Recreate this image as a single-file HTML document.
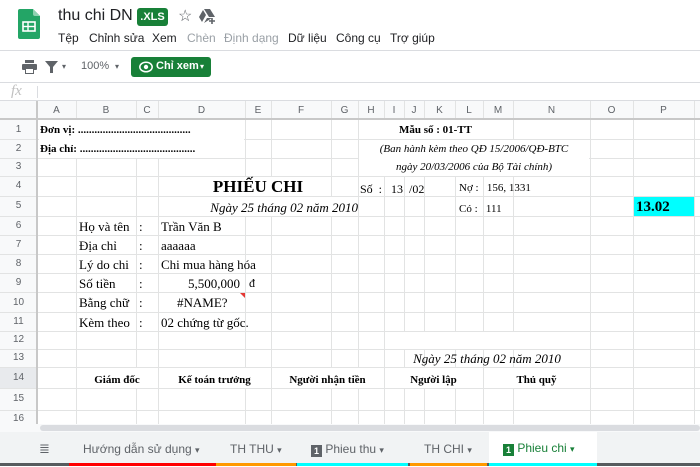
<!DOCTYPE html>
<html><head><meta charset="utf-8"><style>
*{margin:0;padding:0;box-sizing:border-box}
body{width:700px;height:466px;overflow:hidden;background:#fff;position:relative;font-family:"Liberation Sans",Arial,sans-serif;color:#202124}
.a{position:absolute;white-space:nowrap}
.s{font-family:"Liberation Serif","Times New Roman",serif;color:#000}
.m{font-size:12px;top:31px}
.g{color:#9aa0a6}
.hd{font-size:10px;color:#5f6368;text-align:center;position:absolute}
.tab{position:absolute;top:432px;height:34px;font-size:12px;color:#5f6368;line-height:32px;padding-left:14px}
</style></head><body>
<svg class="a" style="left:18px;top:9px" width="22" height="30" viewBox="0 0 22 30"><path d="M2 0h13l7 7v21a2 2 0 0 1-2 2H2a2 2 0 0 1-2-2V2a2 2 0 0 1 2-2z" fill="#23a566"/><path d="M15 0l7 7h-5a2 2 0 0 1-2-2z" fill="#8ed1b1"/><rect x="5" y="13" width="12" height="9" fill="none" stroke="#fff" stroke-width="1.6"/><line x1="5" y1="17.5" x2="17" y2="17.5" stroke="#fff" stroke-width="1.4"/><line x1="10" y1="13" x2="10" y2="22" stroke="#fff" stroke-width="1.4"/></svg>
<div class="a" style="left:58px;top:7px;font-size:16px;color:#202124">thu chi DN</div>
<div class="a" style="left:137px;top:8px;width:31px;height:18px;background:#188038;color:#fff;font-size:11px;font-weight:bold;line-height:18px;text-align:center;border-radius:3px">.XLS</div>
<div class="a" style="left:178px;top:6px;font-size:16px;color:#5f6368">☆</div>
<svg class="a" style="left:199px;top:9px" width="17" height="15" viewBox="0 0 17 15"><path d="M5 0h6l5 8h-6zM4 1l3 5-4 7-3-5zM5 14l3-5h5" fill="#5f6368"/><path d="M13 9v6M10 12h6" stroke="#5f6368" stroke-width="1.6"/></svg>
<div class="a m" style="left:58px">Tệp</div>
<div class="a m" style="left:89px">Chỉnh sửa</div>
<div class="a m" style="left:152px">Xem</div>
<div class="a m g" style="left:187px">Chèn</div>
<div class="a m g" style="left:224px">Định dạng</div>
<div class="a m" style="left:288px">Dữ liệu</div>
<div class="a m" style="left:336px">Công cụ</div>
<div class="a m" style="left:390px">Trợ giúp</div>
<div class="a" style="left:0;top:50px;width:700px;height:1px;background:#dadce0"></div>
<svg class="a" style="left:22px;top:60px" width="15" height="14" viewBox="0 0 15 14"><rect x="3" y="0" width="9" height="3" fill="#5f6368"/><rect x="0" y="4" width="15" height="6" rx="1" fill="#5f6368"/><rect x="3" y="8" width="9" height="6" fill="#5f6368"/><rect x="4" y="9" width="7" height="4" fill="#fff"/></svg>
<svg class="a" style="left:45px;top:61px" width="13" height="12" viewBox="0 0 13 12"><path d="M0 0h13l-5 6v6H5V6z" fill="#5f6368"/></svg>
<div class="a" style="left:62px;top:62px;font-size:8px;color:#5f6368">▾</div>
<div class="a" style="left:81px;top:60px;font-size:11px;color:#5f6368">100%</div>
<div class="a" style="left:115px;top:62px;font-size:8px;color:#5f6368">▾</div>
<div class="a" style="left:131px;top:57px;width:80px;height:20px;background:#188038;border-radius:3px"></div>
<svg class="a" style="left:139px;top:61px" width="14" height="12" viewBox="0 0 14 12"><ellipse cx="7" cy="6" rx="6.2" ry="4.8" fill="none" stroke="#fff" stroke-width="1.5"/><circle cx="7" cy="6" r="2.2" fill="#fff"/></svg>
<div class="a" style="left:156px;top:60px;font-size:11px;color:#fff;font-weight:bold">Chỉ xem</div>
<div class="a" style="left:200px;top:62px;font-size:8px;color:#fff">▾</div>
<div class="a" style="left:0;top:82px;width:700px;height:1px;background:#dadce0"></div>
<div class="a" style="left:11px;top:83px;font-size:15px;color:#c0c0c0;font-style:italic;font-family:'Liberation Serif',serif">fx</div>
<div class="a" style="left:37px;top:86px;width:1px;height:12px;background:#dadce0"></div>
<div class="a" style="left:0;top:100px;width:700px;height:1px;background:#dadce0"></div>
<svg class="a" style="left:0;top:101px" width="700" height="330">
<rect x="0" y="0" width="700" height="18" fill="#f8f9fa"/>
<rect x="0" y="0" width="37" height="330" fill="#f8f9fa"/>
<rect x="0" y="266" width="37" height="21" fill="#e8eaed"/>
<g stroke="#e2e3e3" stroke-width="1">
<line x1="37.5" y1="0" x2="37.5" y2="330"/><line x1="76.5" y1="0" x2="76.5" y2="330"/><line x1="136.5" y1="0" x2="136.5" y2="330"/><line x1="158.5" y1="0" x2="158.5" y2="330"/><line x1="245.5" y1="0" x2="245.5" y2="330"/><line x1="271.5" y1="0" x2="271.5" y2="330"/><line x1="331.5" y1="0" x2="331.5" y2="330"/><line x1="358.5" y1="0" x2="358.5" y2="330"/><line x1="384.5" y1="0" x2="384.5" y2="330"/><line x1="404.5" y1="0" x2="404.5" y2="330"/><line x1="424.5" y1="0" x2="424.5" y2="330"/><line x1="455.5" y1="0" x2="455.5" y2="330"/><line x1="483.5" y1="0" x2="483.5" y2="330"/><line x1="513.5" y1="0" x2="513.5" y2="330"/><line x1="590.5" y1="0" x2="590.5" y2="330"/><line x1="633.5" y1="0" x2="633.5" y2="330"/><line x1="694.5" y1="0" x2="694.5" y2="330"/>
<line x1="0" y1="18.5" x2="700" y2="18.5"/><line x1="0" y1="38.5" x2="700" y2="38.5"/><line x1="0" y1="57.5" x2="700" y2="57.5"/><line x1="0" y1="75.5" x2="700" y2="75.5"/><line x1="0" y1="95.5" x2="700" y2="95.5"/><line x1="0" y1="115.5" x2="700" y2="115.5"/><line x1="0" y1="134.5" x2="700" y2="134.5"/><line x1="0" y1="153.5" x2="700" y2="153.5"/><line x1="0" y1="172.5" x2="700" y2="172.5"/><line x1="0" y1="191.5" x2="700" y2="191.5"/><line x1="0" y1="211.5" x2="700" y2="211.5"/><line x1="0" y1="230.5" x2="700" y2="230.5"/><line x1="0" y1="248.5" x2="700" y2="248.5"/><line x1="0" y1="266.5" x2="700" y2="266.5"/><line x1="0" y1="287.5" x2="700" y2="287.5"/><line x1="0" y1="309.5" x2="700" y2="309.5"/>
</g>
<line x1="37" y1="0" x2="37" y2="330" stroke="#c8c8c8" stroke-width="2"/>
<line x1="0" y1="18" x2="700" y2="18" stroke="#c8c8c8" stroke-width="2"/>
<g fill="#fff">
<rect x="39" y="19" width="205" height="38"/>
<rect x="359" y="19" width="153" height="19"/>
<rect x="359" y="39" width="230" height="36"/>
<rect x="159" y="76" width="171" height="19"/>
<rect x="159" y="96" width="198" height="19"/>
<rect x="385" y="231" width="204" height="17"/>
<rect x="77" y="267" width="80" height="20"/><rect x="159" y="267" width="111" height="20"/><rect x="272" y="267" width="111" height="20"/><rect x="385" y="267" width="97" height="20"/><rect x="484" y="267" width="105" height="20"/>
</g>
<rect x="634" y="96" width="60" height="19" fill="#00ffff"/>
</svg>
<div class="hd" style="left:37px;width:39px;top:105px">A</div><div class="hd" style="left:76px;width:60px;top:105px">B</div><div class="hd" style="left:136px;width:22px;top:105px">C</div><div class="hd" style="left:158px;width:87px;top:105px">D</div><div class="hd" style="left:245px;width:26px;top:105px">E</div><div class="hd" style="left:271px;width:60px;top:105px">F</div><div class="hd" style="left:331px;width:27px;top:105px">G</div><div class="hd" style="left:358px;width:26px;top:105px">H</div><div class="hd" style="left:384px;width:20px;top:105px">I</div><div class="hd" style="left:404px;width:20px;top:105px">J</div><div class="hd" style="left:424px;width:31px;top:105px">K</div><div class="hd" style="left:455px;width:28px;top:105px">L</div><div class="hd" style="left:483px;width:30px;top:105px">M</div><div class="hd" style="left:513px;width:77px;top:105px">N</div><div class="hd" style="left:590px;width:43px;top:105px">O</div><div class="hd" style="left:633px;width:61px;top:105px">P</div>
<div class="hd" style="left:0;width:37px;top:124px">1</div><div class="hd" style="left:0;width:37px;top:143px">2</div><div class="hd" style="left:0;width:37px;top:161px">3</div><div class="hd" style="left:0;width:37px;top:180px">4</div><div class="hd" style="left:0;width:37px;top:200px">5</div><div class="hd" style="left:0;width:37px;top:220px">6</div><div class="hd" style="left:0;width:37px;top:239px">7</div><div class="hd" style="left:0;width:37px;top:258px">8</div><div class="hd" style="left:0;width:37px;top:277px">9</div><div class="hd" style="left:0;width:37px;top:297px">10</div><div class="hd" style="left:0;width:37px;top:316px">11</div><div class="hd" style="left:0;width:37px;top:334px">12</div><div class="hd" style="left:0;width:37px;top:352px">13</div><div class="hd" style="left:0;width:37px;top:372px">14</div><div class="hd" style="left:0;width:37px;top:393px">15</div><div class="hd" style="left:0;width:37px;top:413px">16</div>
<div class="a s" style="left:40px;top:124px;font-size:11px;font-weight:bold">Đơn vị: .........................................</div>
<div class="a s" style="left:40px;top:143px;font-size:11px;font-weight:bold">Địa chỉ: ..........................................</div>
<div class="a s" style="left:358px;width:155px;text-align:center;top:124px;font-size:11px;font-weight:bold">Mẫu số : 01-TT</div>
<div class="a s" style="left:358px;width:232px;text-align:center;top:143px;font-size:11px;font-style:italic">(Ban hành kèm theo QĐ 15/2006/QĐ-BTC</div>
<div class="a s" style="left:358px;width:232px;text-align:center;top:161px;font-size:11px;font-style:italic">ngày 20/03/2006 của Bộ Tài chính)</div>
<div class="a s" style="left:158px;width:200px;text-align:center;top:177px;font-size:17px;font-weight:bold">PHIẾU CHI</div>
<div class="a s" style="left:158px;width:200px;text-align:right;top:200px;font-size:13px;font-style:italic">Ngày 25 tháng 02 năm 2010</div>
<div class="a s" style="left:360px;top:182px;font-size:12px">Số&nbsp; :&nbsp;&nbsp; 13&nbsp; /02</div>
<div class="a s" style="left:459px;top:182px;font-size:11px">Nợ :&nbsp;&nbsp; 156, 1331</div>
<div class="a s" style="left:459px;top:203px;font-size:11px">Có :&nbsp;&nbsp; 111</div>
<div class="a s" style="left:636px;top:199px;font-size:15px;font-weight:bold">13.02</div>
<div class="a s" style="left:79px;top:219px;font-size:13px">Họ và tên</div><div class="a s" style="left:139px;top:219px;font-size:13px">:</div><div class="a s" style="left:161px;top:219px;font-size:13px">Trần Văn B</div>
<div class="a s" style="left:79px;top:238px;font-size:13px">Địa chỉ</div><div class="a s" style="left:139px;top:238px;font-size:13px">:</div><div class="a s" style="left:161px;top:238px;font-size:13px">aaaaaa</div>
<div class="a s" style="left:79px;top:257px;font-size:13px">Lý do chi</div><div class="a s" style="left:139px;top:257px;font-size:13px">:</div><div class="a s" style="left:161px;top:257px;font-size:13px">Chi mua hàng hóa</div>
<div class="a s" style="left:79px;top:276px;font-size:13px">Số tiền</div><div class="a s" style="left:139px;top:276px;font-size:13px">:</div><div class="a s" style="left:188px;top:276px;font-size:13px">5,500,000</div><div class="a s" style="left:249px;top:276px;font-size:12px">đ</div>
<div class="a" style="left:240px;top:293px;width:0;height:0;border-left:5px solid transparent;border-top:5px solid #e53935"></div>
<div class="a s" style="left:79px;top:295px;font-size:13px">Bằng chữ</div><div class="a s" style="left:139px;top:295px;font-size:13px">:</div><div class="a s" style="left:177px;top:295px;font-size:13px">#NAME?</div>
<div class="a s" style="left:79px;top:315px;font-size:13px">Kèm theo</div><div class="a s" style="left:139px;top:315px;font-size:13px">:</div><div class="a s" style="left:161px;top:315px;font-size:13px">02 chứng từ gốc.</div>
<div class="a s" style="left:384px;width:206px;text-align:center;top:351px;font-size:13px;font-style:italic">Ngày 25 tháng 02 năm 2010</div>
<div class="a s" style="left:76px;width:82px;text-align:center;top:374px;font-size:11px;font-weight:bold">Giám đốc</div>
<div class="a s" style="left:158px;width:113px;text-align:center;top:374px;font-size:11px;font-weight:bold">Kế toán trưởng</div>
<div class="a s" style="left:271px;width:113px;text-align:center;top:374px;font-size:11px;font-weight:bold">Người nhận tiền</div>
<div class="a s" style="left:384px;width:99px;text-align:center;top:374px;font-size:11px;font-weight:bold">Người lập</div>
<div class="a s" style="left:483px;width:107px;text-align:center;top:374px;font-size:11px;font-weight:bold">Thủ quỹ</div>
<div class="a" style="left:0;top:424px;width:700px;height:9px;background:#f8f9fa"></div>
<div class="a" style="left:40px;top:425px;width:660px;height:6px;background:#dadce0;border-radius:3px"></div>
<div class="a" style="left:0;top:432px;width:700px;height:34px;background:#f1f3f4"></div>
<div class="a" style="left:39px;top:441px;font-size:13px;color:#5f6368">≣</div>
<div class="tab" style="left:69px;width:147px;top:433px">Hướng dẫn sử dụng <span style="font-size:9px">▾</span></div>
<div class="tab" style="left:216px;width:80px;top:433px">TH THU <span style="font-size:9px">▾</span></div>
<div class="tab" style="left:297px;width:111px;top:433px"><span style="display:inline-block;width:11px;height:12px;background:#5f6368;color:#fff;font-size:9px;line-height:12px;text-align:center;vertical-align:-1px;font-weight:bold">1</span> Phieu thu <span style="font-size:9px">▾</span></div>
<div class="tab" style="left:410px;width:77px;top:433px">TH CHI <span style="font-size:9px">▾</span></div>
<div class="tab" style="left:489px;width:108px;background:#fff;color:#188038;top:432px;height:31px"><span style="display:inline-block;width:11px;height:12px;background:#188038;color:#fff;font-size:9px;line-height:12px;text-align:center;vertical-align:-1px;font-weight:bold">1</span> Phieu chi <span style="font-size:9px">▾</span></div>
<div class="a" style="left:0;top:463px;width:700px;height:3px;background:#3c4043;opacity:.85"></div>
<div class="a" style="left:69px;top:463px;width:147px;height:3px;background:#ff0000"></div>
<div class="a" style="left:216px;top:463px;width:80px;height:3px;background:#ff9900"></div>
<div class="a" style="left:297px;top:463px;width:111px;height:3px;background:#00ffff"></div>
<div class="a" style="left:410px;top:463px;width:77px;height:3px;background:#ff9900"></div>
<div class="a" style="left:489px;top:463px;width:108px;height:3px;background:#00ffff"></div>
</body></html>
